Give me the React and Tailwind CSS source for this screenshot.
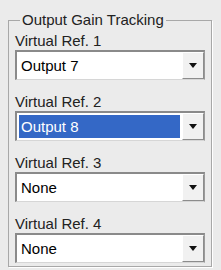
import React from "react";

const refs = [
  { label: "Virtual Ref. 1", value: "Output 7" },
  { label: "Virtual Ref. 2", value: "Output 8", selected: true },
  { label: "Virtual Ref. 3", value: "None" },
  { label: "Virtual Ref. 4", value: "None" },
];

const Combo = ({ value, selected }) => (
  <div className="flex h-[30px] border-t-2 border-l-2 border-b border-r border-t-[#8a8a8a] border-l-[#8a8a8a] border-b-[#d6d6d6] border-r-[#9a9a9a] bg-white">
    <div className="flex-1 flex items-center p-[2px]">
      <div
        className={`flex-1 h-full flex items-center pl-[2px] ${
          selected ? "bg-[#3468c6] text-white" : "text-black"
        }`}
      >
        {value}
      </div>
    </div>
    <div className="w-[22px] flex items-center justify-center bg-[#f1f1f1] border-l border-t border-l-white border-t-white border-r border-b border-r-[#8c8c8c] border-b-[#8c8c8c]">
      <svg width="8" height="5" viewBox="0 0 8 5">
        <path d="M0 0 H8 L4 5 Z" fill="#111" />
      </svg>
    </div>
  </div>
);

export default function App() {
  return (
    <div
      className="w-[221px] h-[270px] bg-[#ebebeb] pt-[11px] text-[15px] leading-[17px] overflow-hidden"
      style={{ fontFamily: '"Liberation Sans", Arial, sans-serif' }}
    >
      <fieldset className="ml-[8px] w-[204px] h-[256px] border border-[#a8a8a8] px-[6px] pb-[5px] shadow-[1px_1px_0_#ffffff]">
        <legend className="ml-[5px] px-[2px] leading-[18px] text-[#222]">
          Output Gain Tracking
        </legend>
        <div className="flex flex-col gap-[13px] pt-[3px]">
          {refs.map((r) => (
            <div key={r.label} className="flex flex-col gap-[1px]">
              <div className="text-[#222]">{r.label}</div>
              <Combo value={r.value} selected={r.selected} />
            </div>
          ))}
        </div>
      </fieldset>
    </div>
  );
}
